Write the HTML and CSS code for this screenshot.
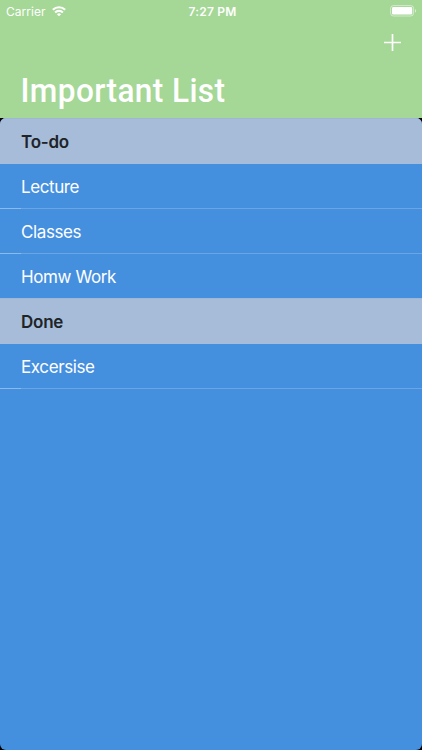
FILE: index.html
```html
<!DOCTYPE html>
<html lang="en">
<head>
<meta charset="utf-8">
<title>Important List</title>
<link rel="stylesheet" href="styles.css">
</head>
<body>
<header class="top">
  <div class="status">
    <div class="carrier"><span class="carrier-name">Carrier</span>
      <svg class="wifi" width="14" height="10.3" viewBox="0 0 15 11" fill="none" stroke="#fff" stroke-width="2.2"><path d="M.9 4.1a9.4 9.4 0 0 1 13.2 0M3.3 6.9a6 6 0 0 1 8.4 0"/><path d="M7.5 11 5.3 8.8a3.1 3.1 0 0 1 4.4 0z" fill="#fff" stroke="none"/></svg>
    </div>
    <span class="time">7:27 PM</span>
    <svg class="battery" width="28" height="12" viewBox="0 0 28 12"><rect x=".6" y=".6" width="23" height="10.4" rx="2.8" fill="none" stroke="#fff" stroke-opacity=".5"/><rect x="2" y="2" width="20.2" height="7.6" rx="1.4" fill="#fff"/><path d="M25 4v3.7c1.6-.6 1.6-3.1 0-3.7z" fill="#fff" fill-opacity=".55"/></svg>
  </div>
  <div class="actions">
    <svg width="18" height="18" viewBox="0 0 18 18" stroke="#fff" stroke-width="1.7"><path d="M8.5 0v17M0 8.5h17"/></svg>
  </div>
  <h1 class="title">Important List</h1>
</header>
<main class="sheet">
  <div class="list">
    <h2 class="section">To-do</h2>
    <div class="row">Lecture</div>
    <div class="row">Classes</div>
    <div class="row last">Homw Work</div>
    <h2 class="section">Done</h2>
    <div class="row">Excersise</div>
  </div>
</main>
</body>
</html>
```
FILE: styles.css
```css
* { box-sizing: border-box; }
body {
  margin: 0;
  height: 750px;
  display: flex;
  flex-direction: column;
  overflow: hidden;
  background: #000;
  color: #fff;
  font-family: Inter, "Liberation Sans", sans-serif;
}
.top {
  height: 118px;
  flex: none;
  background: #a5d796;
}
.status {
  height: 22px;
  padding: 0 4px 0 6px;
  display: grid;
  grid-template-columns: 1fr auto 1fr;
  align-items: center;
  font-size: 12px;
}
.carrier { display: flex; align-items: center; gap: 6px; }
.carrier-name { letter-spacing: 0.05px; }
.wifi { display: block; }
.time { font-weight: 600; letter-spacing: 0.2px; padding-left: 1px; }
.battery { justify-self: end; display: block; }
.actions {
  height: 42px;
  padding: 12px 20px 0 0;
  display: flex;
  justify-content: flex-end;
}
.title {
  margin: 0;
  padding: 5px 0 0 20px;
  font: 500 34px/42px Roboto, sans-serif;
  letter-spacing: 0.4px;
  white-space: nowrap;
  transform: translateX(0.5px) scaleX(0.93);
  transform-origin: 20px 0;
}
.sheet {
  flex: 1;
  overflow: hidden;
  border-radius: 6px;
  background: #458fdf;
}
.section {
  margin: 0;
  height: 46px;
  padding: 1px 21px 0;
  display: flex;
  align-items: center;
  background: #a6bcd8;
  border-top: 1px solid #9db7d5;
  color: #202428;
  font-size: 17px;
  font-weight: 600;
  letter-spacing: -0.25px;
}
.row {
  height: 45px;
  padding: 1px 21px 0;
  display: flex;
  align-items: center;
  border-bottom: 1px solid;
  border-image: linear-gradient(90deg, #8cbaeb 21px, #6ba5e4 21px) 0 0 1 0;
  font-size: 17px;
  letter-spacing: -0.4px;
}
.row.last {
  height: 44px;
  border: 0;
}
```
